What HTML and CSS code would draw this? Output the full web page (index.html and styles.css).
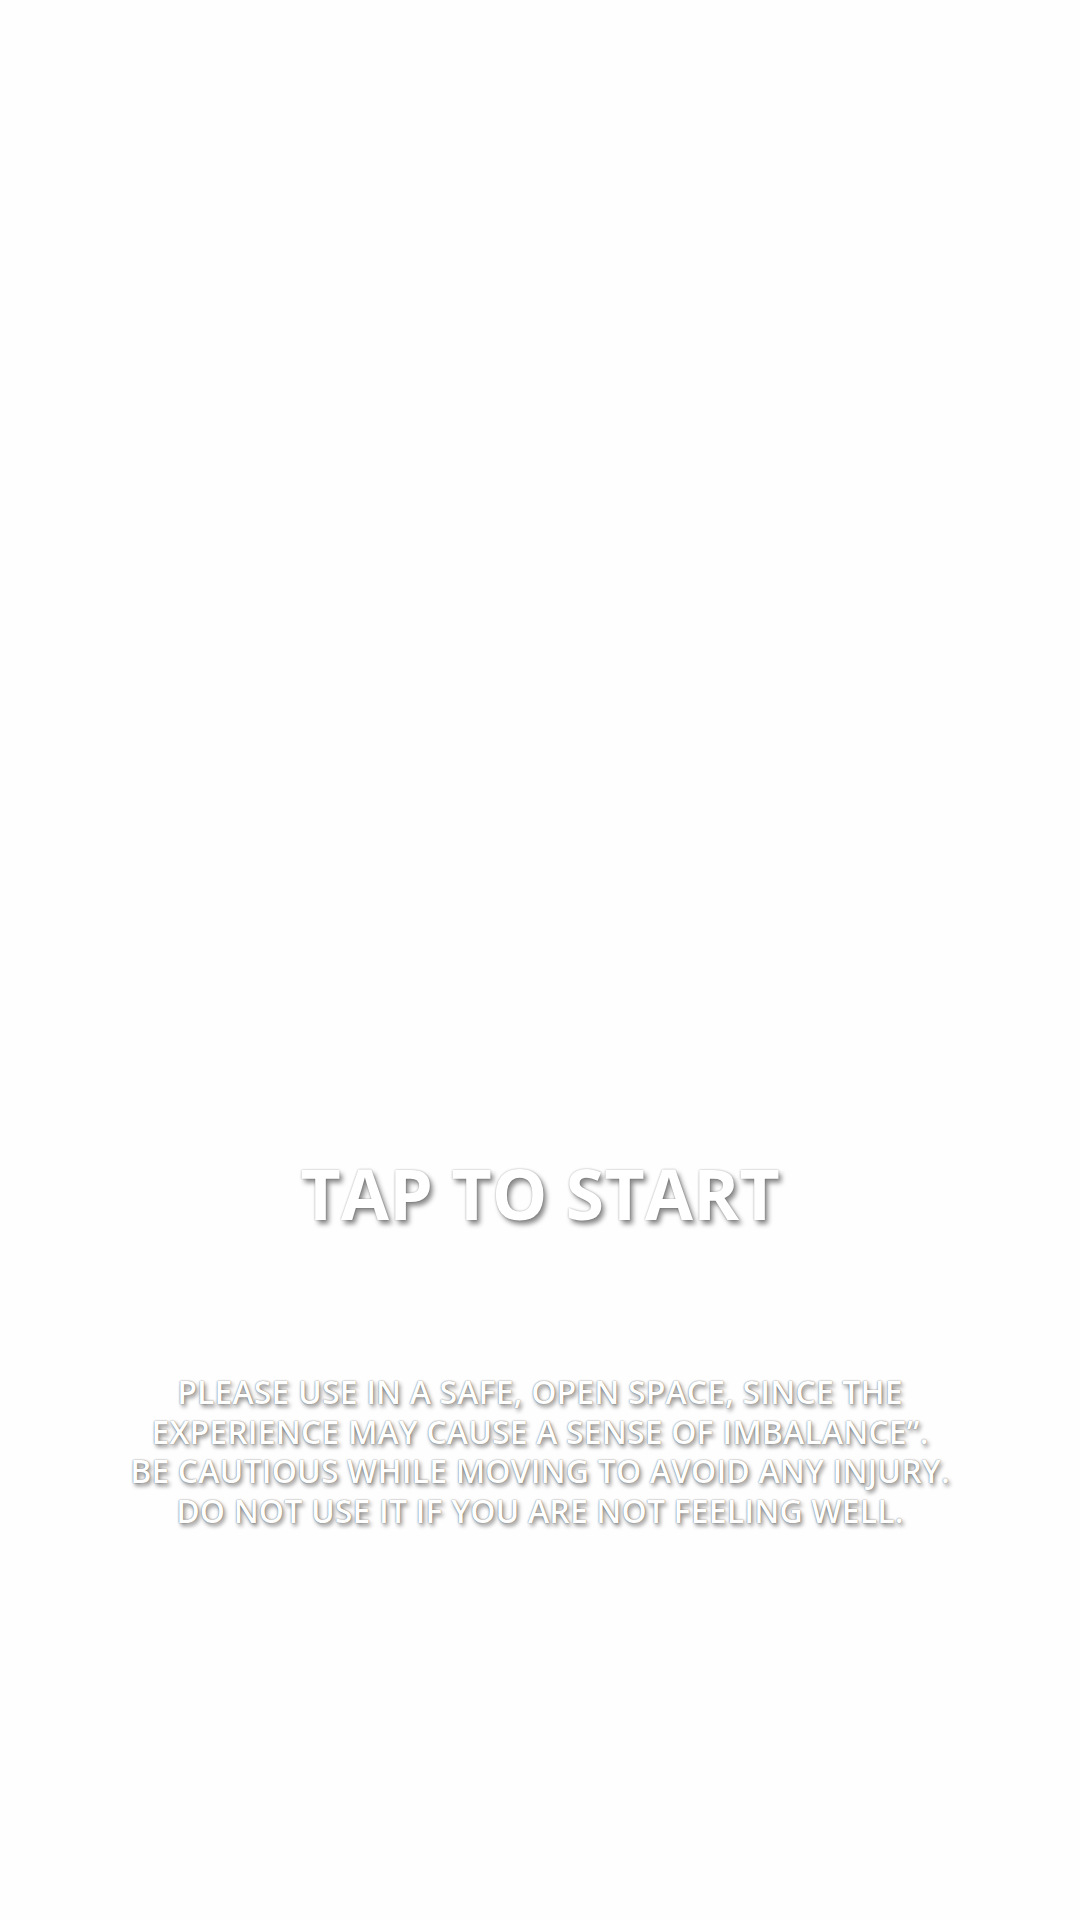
FILE: index.html
```html
<!DOCTYPE html>
<html>
<head>
<meta charset="utf-8">
<link rel="stylesheet" href="styles.css">
</head>
<body>
<main class="screen">
  <h1 class="tap">TAP TO START</h1>
  <p class="warning">PLEASE USE IN A SAFE, OPEN SPACE, SINCE THE<br>EXPERIENCE MAY CAUSE A SENSE OF IMBALANCE”.<br>BE CAUTIOUS WHILE MOVING TO AVOID ANY INJURY.<br>DO NOT USE IT IF YOU ARE NOT FEELING WELL.</p>
</main>
</body>
</html>
```
FILE: styles.css
```css
html, body {
  margin: 0;
  padding: 0;
  background: #fefefe;
}
.screen {
  width: 1080px;
  height: 1920px;
  display: flex;
  flex-direction: column;
  align-items: center;
  padding-top: 1150px;
  box-sizing: border-box;
  font-family: "Open Sans", "Liberation Sans", sans-serif;
  color: #ffffff;
}
.tap {
  margin: 0;
  font-size: 70px;
  font-weight: 700;
  line-height: 86px;
  letter-spacing: 0;
  text-shadow: 0 0 2px rgba(0,0,0,0.35), 3px 4px 5px rgba(0,0,0,0.45);
}
.warning {
  margin: 136px 0 0;
  font-size: 32px;
  font-weight: 600;
  line-height: 39.5px;
  text-align: center;
  letter-spacing: 0.15px;
  text-shadow: 0 0 1.5px rgba(0,0,0,0.6), 2px 3px 4px rgba(0,0,0,0.45);
}
```
